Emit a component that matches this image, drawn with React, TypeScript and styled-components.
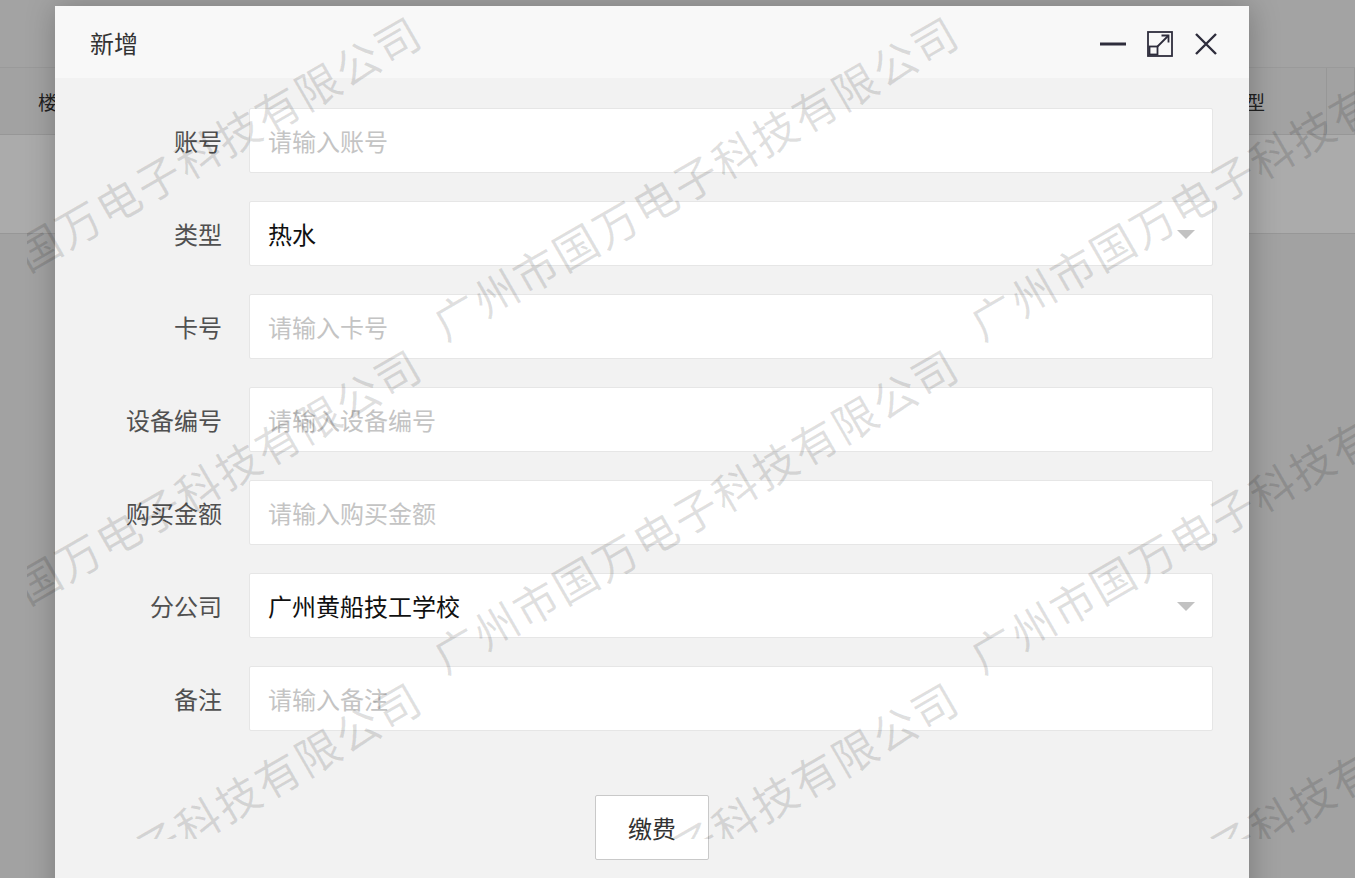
import React from "react";
import styled, { createGlobalStyle } from "styled-components";

const GlobalStyle = createGlobalStyle`
    html, body {
        margin: 0;
        padding: 0;
        width: 100%;
        height: 100%;
        overflow: hidden;
    }
    body {
        font-family: "Noto Sans CJK SC", "Noto Sans", "Liberation Sans", sans-serif;
        background: #ffffff;
    }
    * {
        box-sizing: border-box;
    }
`

const Page = styled.div`
    position: relative;
    width: 1355px;
    height: 878px;
    overflow: hidden;
    background: #f2f2f2;
    display: flex;
    flex-direction: column;
`

const TopArea = styled.div`
    height: 68px;
    background: #f4f4f4;
    border-bottom: 1px solid #e6e6e6;
`

const HeadRow = styled.div`
    height: 67px;
    display: flex;
    background: #f2f2f2;
    border-bottom: 1px solid #e2e2e2;
`

const HeadCell = styled.div<{ $w?: number; $pad: number }>`
    ${props => props.$w ? `width: ${props.$w}px;` : "flex: 1;"}
    display: flex;
    align-items: center;
    padding-left: ${props => props.$pad}px;
    font-size: 19px;
    color: #333;
    border-right: 1px solid #e2e2e2;
`

const BodyRow = styled.div`
    height: 99px;
    background: #ffffff;
    border-bottom: 1px solid #e2e2e2;
`

const Shade = styled.div`
    position: absolute;
    inset: 0;
    background: rgba(0, 0, 0, 0.33);
`

const Modal = styled.div`
    position: absolute;
    left: 55px;
    top: 6px;
    width: 1194px;
    height: 920px;
    background: #f2f2f2;
    border-radius: 2px;
    box-shadow: 1px 1px 30px rgba(0, 0, 0, 0.25);
    display: flex;
    flex-direction: column;
`

const Header = styled.div`
    height: 72px;
    flex-shrink: 0;
    background: #f8f8f8;
    display: flex;
    align-items: center;
    padding: 0 31px 0 35px;
`

const Title = styled.span`
    font-size: 24px;
    color: #333;
    flex: 1;
`

const Tools = styled.div`
    display: flex;
    align-items: center;
    gap: 21px;
    padding-top: 4px;
`

const ToolIcon = styled.svg`
    display: block;
`

const Form = styled.div`
    padding-top: 30px;
    display: flex;
    flex-direction: column;
    gap: 28px;
`

const Row = styled.div`
    display: flex;
    align-items: center;
    height: 65px;
`

const Label = styled.label`
    width: 194px;
    padding-right: 27px;
    text-align: right;
    font-size: 24px;
    color: #505050;
`

const InputWrap = styled.div`
    position: relative;
    width: 964px;
    height: 65px;
`

const Input = styled.input`
    width: 100%;
    height: 100%;
    border: 1px solid #e6e6e6;
    border-radius: 2px;
    background: #ffffff;
    padding: 0 50px 0 18px;
    font-family: "Noto Sans CJK SC", "Noto Sans", sans-serif;
    font-size: 24px;
    color: #111;
    outline: none;
    &::placeholder {
        color: #c4c4c4;
    }
`

const Arrow = styled.i`
    position: absolute;
    right: 18px;
    top: 29px;
    width: 0;
    height: 0;
    border-left: 9px solid transparent;
    border-right: 9px solid transparent;
    border-top: 9px solid #c2c2c2;
`

const Footer = styled.div`
    margin-top: 64px;
    display: flex;
    justify-content: center;
`

const Button = styled.button`
    width: 114px;
    height: 65px;
    border: 1px solid #c9c9c9;
    border-radius: 2px;
    background: #ffffff;
    font-family: "Noto Sans CJK SC", "Noto Sans", sans-serif;
    font-size: 24px;
    color: #333;
`

const Watermark = styled.div`
    position: absolute;
    left: 27px;
    top: 0;
    right: 0;
    height: 839px;
    overflow: hidden;
    pointer-events: none;
`

const Mark = styled.span<{ $x: number; $y: number }>`
    position: absolute;
    left: ${props => props.$x}px;
    top: ${props => props.$y}px;
    transform: translate(-50%, -50%) rotate(-30deg);
    white-space: nowrap;
    font-size: 44px;
    letter-spacing: 2px;
    color: rgba(0, 0, 0, 0.12);
`

const fields = [
    { label: "账号", placeholder: "请输入账号" },
    { label: "类型", value: "热水", select: true },
    { label: "卡号", placeholder: "请输入卡号" },
    { label: "设备编号", placeholder: "请输入设备编号" },
    { label: "购买金额", placeholder: "请输入购买金额" },
    { label: "分公司", value: "广州黄船技工学校", select: true },
    { label: "备注", placeholder: "请输入备注" },
]

// marks are placed inside the watermark layer, which starts 27px from the left
const marks: { x: number; y: number }[] = []
for (let r = 0; r < 3; r++) {
    for (let c = -1; c < 2; c++) {
        marks.push({ x: 695 - 27 + c * 537, y: 176 + r * 333 })
    }
}

export default function App() {
    return (
        <>
            <GlobalStyle />
            <Page>
                <TopArea />
                <HeadRow>
                    <HeadCell $pad={38}>楼栋</HeadCell>
                    <HeadCell $w={115} $pad={15}>类型</HeadCell>
                    <HeadCell $w={28} $pad={0} />
                </HeadRow>
                <BodyRow />
                <Shade />
                <Modal>
                    <Header>
                        <Title>新增</Title>
                        <Tools>
                            <ToolIcon width="26" height="26" viewBox="0 0 26 26">
                                <rect x="0" y="11.5" width="26" height="3" fill="#2e2d3c" />
                            </ToolIcon>
                            <ToolIcon width="26" height="26" viewBox="0 0 26 26" fill="none" stroke="#2e2d3c" strokeWidth="1.8">
                                <rect x="1" y="1" width="24" height="24" />
                                <rect x="2.5" y="15.5" width="8" height="8" />
                                <path d="M10.5 15.5L21.5 4.5" />
                                <path d="M14.5 4.5H21.5V11.5" />
                            </ToolIcon>
                            <ToolIcon width="24" height="24" viewBox="0 0 24 24" fill="none" stroke="#2e2d3c" strokeWidth="2.4">
                                <path d="M2 2L22 22M22 2L2 22" />
                            </ToolIcon>
                        </Tools>
                    </Header>
                    <Form>
                        {fields.map(f => (
                            <Row key={f.label}>
                                <Label>{f.label}</Label>
                                <InputWrap>
                                    {f.select
                                        ? <Input readOnly defaultValue={f.value} />
                                        : <Input placeholder={f.placeholder} />}
                                    {f.select && <Arrow />}
                                </InputWrap>
                            </Row>
                        ))}
                    </Form>
                    <Footer>
                        <Button>缴费</Button>
                    </Footer>
                </Modal>
                <Watermark>
                    {marks.map((m, i) => (
                        <Mark key={i} $x={m.x} $y={m.y}>广州市国万电子科技有限公司</Mark>
                    ))}
                </Watermark>
            </Page>
        </>
    )
}
